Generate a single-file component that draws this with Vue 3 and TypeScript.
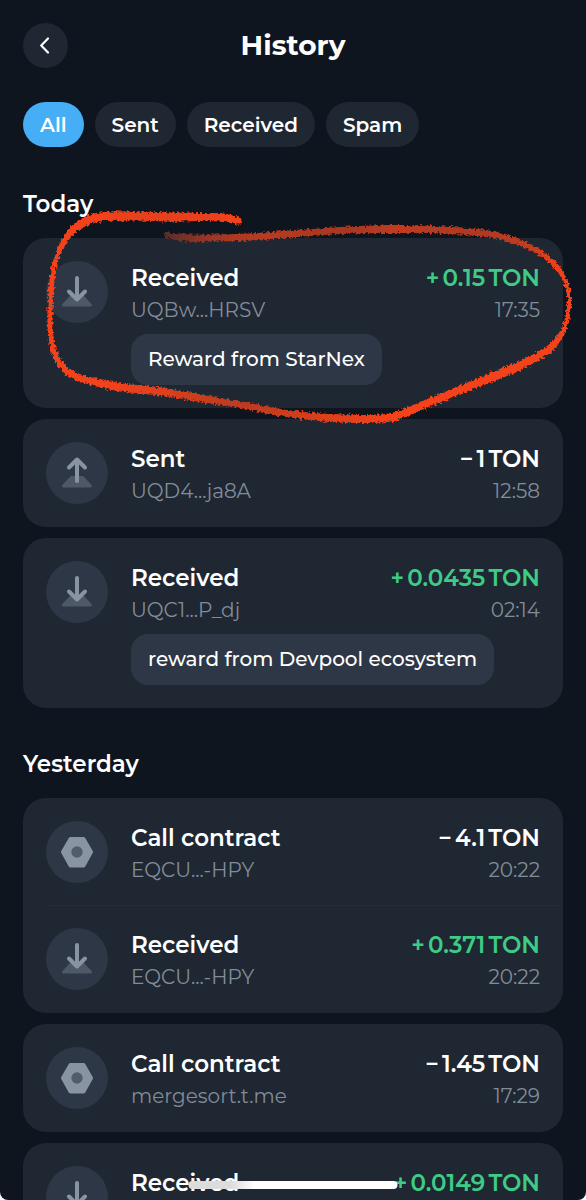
<script setup lang="ts">
import { ref } from 'vue'

type Kind = 'received' | 'sent' | 'contract'
interface Entry {
  kind: Kind
  title: string
  address: string
  sign: '+' | '−'
  amount: string
  time: string
  memo?: string
}
interface Day {
  label: string
  cards: Entry[][]
}

const filters = ['All', 'Sent', 'Received', 'Spam']
const active = ref('All')

const days: Day[] = [
  {
    label: 'Today',
    cards: [
      [{ kind: 'received', title: 'Received', address: 'UQBw...HRSV', sign: '+', amount: '0.15', time: '17:35', memo: 'Reward from StarNex' }],
      [{ kind: 'sent', title: 'Sent', address: 'UQD4...ja8A', sign: '−', amount: '1', time: '12:58' }],
      [{ kind: 'received', title: 'Received', address: 'UQC1...P_dj', sign: '+', amount: '0.0435', time: '02:14', memo: 'reward from Devpool ecosystem' }],
    ],
  },
  {
    label: 'Yesterday',
    cards: [
      [
        { kind: 'contract', title: 'Call contract', address: 'EQCU...-HPY', sign: '−', amount: '4.1', time: '20:22' },
        { kind: 'received', title: 'Received', address: 'EQCU...-HPY', sign: '+', amount: '0.371', time: '20:22' },
      ],
      [{ kind: 'contract', title: 'Call contract', address: 'mergesort.t.me', sign: '−', amount: '1.45', time: '17:29' }],
      [{ kind: 'received', title: 'Received', address: '', sign: '+', amount: '0.0149', time: '' }],
    ],
  },
]

// Marker line: x, y, width, strength (0 = faint, 1 = full colour)
const marker: number[][] = [
  [238, 221, 7, 1], [226, 218, 8, 1], [205, 217, 8, 0.95], [170, 217, 9, 0.95], [135, 216, 9, 0.95],
  [100, 217, 9, 1], [83, 223, 8, 1], [70, 233, 7, 1], [60, 249, 5, 1], [54, 268, 5, 1], [51, 290, 5, 1],
  [50, 320, 5, 1], [52, 343, 5, 1], [59, 362, 6, 1], [75, 376, 7, 1], [108, 385, 8, 1], [135, 389, 8, 0.95],
  [165, 392, 8, 0.9], [205, 399, 7, 0.8], [247, 406, 7, 0.75], [277, 412, 7, 0.8], [300, 415, 7, 0.85],
  [330, 418, 8, 0.9], [362, 419, 8, 0.95], [386, 418, 8, 1], [402, 414, 8, 1], [433, 401, 8, 1],
  [465, 388, 8, 1], [492, 377, 9, 1], [523, 364, 8, 1], [549, 349, 7, 1], [563, 331, 5, 1], [569, 306, 4, 1],
  [566, 283, 4, 1], [553, 263, 5, 0.95], [532, 248, 6, 0.8], [495, 235, 7, 0.7], [443, 230, 7, 0.7],
  [400, 229, 8, 0.75], [350, 230, 7, 0.65], [290, 234, 7, 0.7], [250, 237, 7, 0.7], [213, 238, 7, 0.6],
  [187, 238, 7, 0.45], [167, 235, 5, 0.3],
]

interface Dab { d: string; width: number; color: string }
const spline = (a: number, b: number, c: number, d: number, t: number) =>
  0.5 * (2 * b + (c - a) * t + (2 * a - 5 * b + 4 * c - d) * t * t + (3 * b - a - 3 * c + d) * t * t * t)
const mix = (a: number, b: number, t: number) => Math.round(a + (b - a) * t)

function at(i: number, t: number): number[] {
  const last = marker.length - 1
  const p = [i - 1, i, i + 1, i + 2].map((n) => marker[Math.min(last, Math.max(0, n))])
  return [0, 1, 2, 3].map((k) => spline(p[0][k], p[1][k], p[2][k], p[3][k], t))
}

const dabs: Dab[] = []
for (let i = 0; i < marker.length - 1; i++) {
  for (let s = 0; s < 6; s++) {
    const a = at(i, s / 6)
    const b = at(i, (s + 1) / 6)
    dabs.push({
      d: `M${a[0]} ${a[1]}L${b[0]} ${b[1]}`,
      width: a[2],
      color: `rgb(${mix(30, 243, a[3])},${mix(38, 66, a[3])},${mix(50, 26, a[3])})`,
    })
  }
}
</script>

<template>
  <main class="screen">
    <header class="top">
      <button class="back" type="button" aria-label="Back">
        <svg viewBox="0 0 45 45" aria-hidden="true"><path d="M25 15.500 18.200 22.500 25 29.500" /></svg>
      </button>
      <h1>History</h1>
    </header>

    <nav class="filters" aria-label="Filter">
      <button
        v-for="f in filters"
        :key="f"
        type="button"
        :class="['chip', { active: f === active }]"
        :aria-pressed="f === active"
        @click="active = f"
      >{{ f }}</button>
    </nav>

    <section v-for="day in days" :key="day.label" class="day">
      <h2>{{ day.label }}</h2>
      <ul v-for="(card, c) in day.cards" :key="c" class="card">
        <li v-for="(e, i) in card" :key="i" class="row">
          <svg class="icon" viewBox="0 0 62 62" aria-hidden="true">
            <circle class="disc" cx="31" cy="31" r="31" />
            <template v-if="e.kind === 'contract'">
              <path class="nut" d="M24.500 18h13L45 31l-7.500 13.500h-13L17 31Z" />
              <circle class="hole" cx="31" cy="31" r="5.700" />
            </template>
            <template v-else>
              <path class="base" d="M25.500 35.500h11l8 8.500h-27Z" />
              <path v-if="e.kind === 'received'" class="arrow" d="M31 17v21.500M23 30.500l8 8 8-8" />
              <path v-else class="arrow" d="M31 39V17.500M23 25.500l8-8 8 8" />
            </template>
          </svg>
          <div class="body">
            <div class="line primary">
              <span>{{ e.title }}</span>
              <span :class="{ gain: e.sign === '+' }">{{ e.sign }}&#8201;{{ e.amount }}&#8201;TON</span>
            </div>
            <div class="line secondary">
              <span>{{ e.address }}</span>
              <time>{{ e.time }}</time>
            </div>
            <p v-if="e.memo" class="memo">{{ e.memo }}</p>
          </div>
        </li>
      </ul>
    </section>

    <svg class="marker" viewBox="0 0 586 460" aria-hidden="true">
      <defs>
        <filter id="crayon" x="0" y="0" width="586" height="460" filterUnits="userSpaceOnUse">
          <feTurbulence type="fractalNoise" baseFrequency="0.4" numOctaves="2" seed="4" result="noise" />
          <feDisplacementMap in="SourceGraphic" in2="noise" scale="6" xChannelSelector="R" yChannelSelector="G" />
          <feGaussianBlur stdDeviation="0.4" />
        </filter>
      </defs>
      <g filter="url(#crayon)">
        <path v-for="(s, i) in dabs" :key="i" :d="s.d" :stroke="s.color" :stroke-width="s.width" stroke-linecap="round" />
      </g>
    </svg>
    <div class="home"></div>
  </main>
</template>

<style>
body {
  margin: 0;
  background: #fff;
}
</style>

<style scoped>
.screen {
  position: relative;
  box-sizing: border-box;
  height: 100vh;
  overflow: hidden;
  padding: 23px 23px 0;
  border-radius: 0 0 8px 8px;
  background: #0f151e;
  color: #fff;
  font-family: Montserrat, Inter, "Noto Sans", sans-serif;
}
.top {
  display: grid;
  grid-template-columns: 45px 1fr 45px;
  align-items: center;
}
.back {
  width: 45px;
  height: 45px;
  padding: 0;
  border: 0;
  border-radius: 50%;
  background: #1e2732;
}
.back svg {
  display: block;
  fill: none;
  stroke: #fff;
  stroke-width: 2.2;
  stroke-linecap: round;
  stroke-linejoin: round;
}
h1 {
  margin: 0;
  text-align: center;
  font-size: 28px;
  line-height: 45px;
  font-weight: 700;
}
.filters {
  display: flex;
  gap: 11px;
  margin: 34px 0 12px;
}
.chip {
  height: 45px;
  padding: 0 17px;
  border: 0;
  border-radius: 23px;
  background: #1e2732;
  color: #fff;
  font: inherit;
  font-size: 20px;
  font-weight: 600;
}
.chip.active {
  background: #45aef5;
}
.day {
  padding-top: 28px;
}
h2 {
  margin: 0 0 17px;
  font-size: 23px;
  line-height: 34px;
  font-weight: 600;
}
.card {
  margin: 0 0 11px;
  padding: 0;
  list-style: none;
  border-radius: 23px;
  background: #1e2732;
}
.row {
  display: flex;
  gap: 23px;
  padding: 23px 23px 21px;
}
.row + .row {
  margin-left: 23px;
  padding-left: 0;
  padding-top: 22px;
  box-shadow: 0 -1px #232c38;
}
.icon {
  flex: none;
  width: 62px;
  height: 62px;
}
.disc {
  fill: #2e3746;
}
.base {
  fill: #4e5867;
  stroke: #4e5867;
  stroke-width: 3;
  stroke-linejoin: round;
}
.arrow {
  fill: none;
  stroke: #8994a3;
  stroke-width: 4;
  stroke-linecap: round;
  stroke-linejoin: round;
}
.nut {
  fill: #8994a3;
  stroke: #8994a3;
  stroke-width: 4;
  stroke-linejoin: round;
}
.hole {
  fill: #525d6b;
}
.body {
  flex: 1;
  min-width: 0;
}
.line {
  display: flex;
  justify-content: space-between;
}
.primary {
  font-size: 23px;
  line-height: 34px;
  font-weight: 600;
}
.secondary {
  min-height: 30px;
  font-size: 20px;
  line-height: 30px;
  color: #828c99;
}
.gain {
  color: #3ecb86;
}
.memo {
  width: fit-content;
  margin: 9px 0 2px;
  padding: 0 17px;
  border-radius: 17px;
  background: #2e3746;
  font-size: 20px;
  line-height: 51px;
  font-weight: 500;
}
.marker {
  position: absolute;
  top: 0;
  left: 0;
  width: 100%;
  pointer-events: none;
  fill: none;
}
.home {
  position: absolute;
  bottom: 11px;
  left: 50%;
  width: 209px;
  height: 8px;
  border-radius: 4px;
  transform: translateX(-50%);
  background: linear-gradient(90deg, #dcdcdc 20%, #fff 32%);
}
</style>
